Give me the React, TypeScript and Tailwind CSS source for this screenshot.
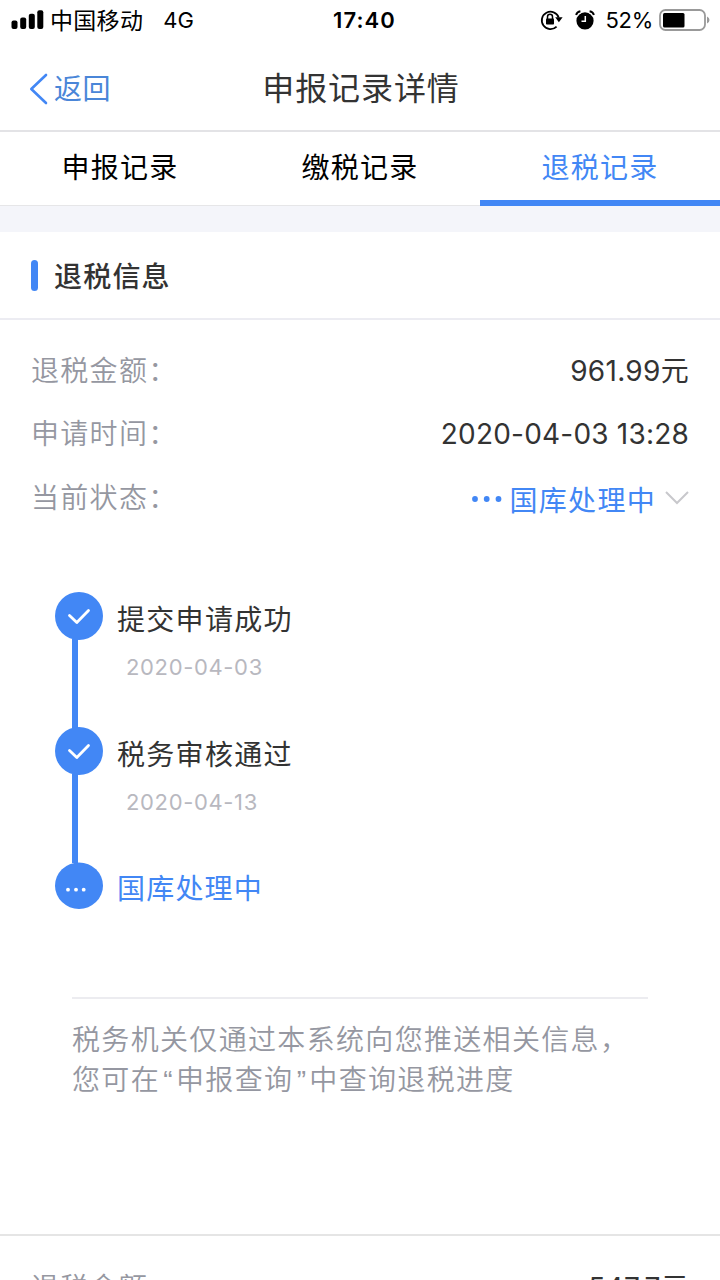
import React from 'react';

const tabs = [
  { id: 'declare', label: '申报记录' },
  { id: 'pay', label: '缴税记录' },
  { id: 'refund', label: '退税记录' },
];

const steps = [
  { title: '提交申请成功', date: '2020-04-03', done: true },
  { title: '税务审核通过', date: '2020-04-13', done: true },
  { title: '国库处理中', date: '', done: false },
];

const StatusBar = () => (
  <div className="flex h-10 shrink-0 items-center text-black">
    <div className="flex flex-1 items-center pl-[11px]">
      <svg width="34" height="20" viewBox="0 0 34 20">
        <rect x="0.5" y="10.5" width="6" height="8.5" rx="2" />
        <rect x="9.2" y="7.5" width="6" height="11.5" rx="2" />
        <rect x="17.8" y="3.8" width="6" height="15.2" rx="2" />
        <rect x="26.3" y="0.3" width="6" height="18.7" rx="2" />
      </svg>
      <span className="ml-[5px] pt-0.5 text-[23px] leading-10 tracking-[0.3px]">中国移动</span>
      <span className="ml-5 text-[22px] leading-10">4G</span>
    </div>
    <span className="w-[74px] pl-2 text-center text-[22px] leading-10 font-semibold tracking-[1.1px]">17:40</span>
    <div className="flex flex-1 items-center justify-end pr-[10px]">
      <svg width="23" height="22" viewBox="0 0 23 22" fill="none">
        <path d="M16.6 17.6A8.7 8.7 0 1 1 18.7 8.5" stroke="#000" strokeWidth="1.8" />
        <path d="M15.2 8.2h7.4l-3.7 5z" fill="#000" />
        <rect x="6" y="9.5" width="8" height="6" rx="0.8" fill="#000" />
        <path d="M7.5 10V7.8a2.5 2.5 0 0 1 5 0V10" stroke="#000" strokeWidth="1.5" />
      </svg>
      <svg className="ml-3" width="20" height="20" viewBox="0 0 20 20" fill="none">
        <circle cx="10" cy="10.8" r="8.6" fill="#000" />
        <path d="M10.3 6v5.2H6.5" stroke="#fff" strokeWidth="1.5" />
        <path d="M1 5.3Q1.8 1.8 5.4 1.2M19 5.3Q18.2 1.8 14.6 1.2" stroke="#fff" strokeWidth="4.5" />
        <path d="M1.1 5Q1.9 1.8 5.4 1.2M18.9 5Q18.1 1.8 14.6 1.2" stroke="#000" strokeWidth="1.9" />
      </svg>
      <span className="ml-[11px] text-[22px] leading-10 tracking-[-0.3px]">52%</span>
      <svg className="ml-1.5" width="51" height="22" viewBox="0 0 51 22" fill="none">
        <rect x="1" y="1" width="45" height="20" rx="5.5" stroke="#999" strokeWidth="1.8" />
        <rect x="4" y="4" width="21.5" height="14.5" rx="1.5" fill="#000" />
        <path d="M48 7.5q2.5 1 2.5 3.5t-2.5 3.5z" fill="#999" />
      </svg>
    </div>
  </div>
);

const Header = () => (
  <header className="grid h-[92px] shrink-0 grid-cols-3 items-center border-b-2 border-[#e3e3e6] pt-2">
    <button className="flex items-center pl-[29px] text-[#4287f5]">
      <svg className="-mt-px" width="19" height="32" viewBox="0 0 19 32" fill="none" stroke="currentColor" strokeWidth="2.6" strokeLinecap="round" strokeLinejoin="round">
        <path d="M17 2 2.3 16 17 30" />
      </svg>
      <span className="ml-[6px] text-[28px] leading-10 tracking-[0.6px] text-[#4a86d8]">返回</span>
    </button>
    <h1 className="pl-0.5 text-center text-[32px] leading-10 tracking-[0.9px] whitespace-nowrap text-[#333]">申报记录详情</h1>
  </header>
);

const Tabs = () => (
  <nav className="grid h-[74px] shrink-0 grid-cols-3 shadow-[inset_0_-1px_0_#e6e6e8]">
    {tabs.map((tab) => (
      <button
        key={tab.id}
        className={
          tab.id === 'refund'
            ? 'border-b-6 border-[#4287f5] pt-1 text-[28px] leading-10 tracking-[1.3px] text-[#4287f5]'
            : 'pt-1 pb-1.5 text-[28px] leading-10 tracking-[1.3px] text-black'
        }
      >
        {tab.label}
      </button>
    ))}
  </nav>
);

const InfoRow = ({ label, children }: { label: string; children: React.ReactNode }) => (
  <div className="flex h-[63.5px] shrink-0 items-center justify-between text-[28px] leading-10">
    <span className="font-[350] tracking-[1.3px] text-[#9597a1]">{label}：</span>
    {children}
  </div>
);

const StepIcon = ({ done }: { done: boolean }) => (
  <svg className="block" width="48" height="48" viewBox="0 0 48 48" fill="none">
    {done ? (
      <>
        <circle cx="24" cy="24" r="24" fill="#4287f5" />
        <path d="m14.5 23.5 7.3 7L33.5 18.5" stroke="#fff" strokeWidth="2.8" strokeLinecap="round" strokeLinejoin="round" />
      </>
    ) : (
      <>
        <ellipse cx="24" cy="24.7" rx="24" ry="23.2" fill="#4287f5" />
        <g fill="#fff">
          <circle cx="13" cy="28.7" r="1.9" />
          <circle cx="21" cy="28.7" r="1.9" />
          <circle cx="28.7" cy="28.7" r="1.9" />
        </g>
      </>
    )}
  </svg>
);

const Timeline = () => (
  <ol className="pl-[55px]">
    {steps.map((step, i) => (
      <li key={step.title} className="flex h-[134.5px]">
        <div className="flex w-12 shrink-0 flex-col">
          <StepIcon done={step.done} />
          {i < steps.length - 1 && <div className="-mt-px -mb-0.5 ml-[17px] w-1.5 flex-1 bg-[#4287f5]" />}
        </div>
        <div className="ml-[14px] pt-2">
          <p className={step.done ? 'text-[28px] leading-10 tracking-[1.3px] text-[#333]' : 'text-[28px] leading-10 tracking-[1.2px] text-[#4287f5]'}>
            {step.title}
          </p>
          {step.date && <p className="mt-[7px] ml-[9px] text-[22px] leading-10 tracking-[0.65px] text-[#b8b8bf]">{step.date}</p>}
        </div>
      </li>
    ))}
  </ol>
);

const Quote = ({ children }: { children: React.ReactNode }) => (
  <span className="inline-block w-4 text-center font-['Liberation_Sans',sans-serif] leading-none tracking-normal">{children}</span>
);

const App = () => {
  return (
    <div className="flex h-[1280px] w-[720px] flex-col overflow-hidden bg-white font-['Inter','Noto_Sans_CJK_SC',sans-serif]">
      <StatusBar />
      <Header />
      <Tabs />
      <div className="h-[26px] shrink-0 bg-[#f4f5fa]" />

      <div className="flex h-[88px] shrink-0 items-center border-b-2 border-[#ececf2] pt-px pl-[31px]">
        <span className="h-[31px] w-[7px] rounded-full bg-[#4287f5]" />
        <h2 className="ml-4 pt-[3px] text-[28px] leading-10 font-medium tracking-[1.2px] text-[#333]">退税信息</h2>
      </div>

      <section className="h-[272px] shrink-0 px-[31px] pt-[19px]">
        <InfoRow label="退税金额">
          <span className="tracking-[0.3px] text-[#333]">961.99元</span>
        </InfoRow>
        <InfoRow label="申请时间">
          <span className="tracking-[0.2px] text-[#333]">2020-04-03 13:28</span>
        </InfoRow>
        <InfoRow label="当前状态">
          <span className="flex items-center pt-1.5 tracking-[1.3px] text-[#4287f5]">
            <svg className="mr-[6px] -mt-1" width="32" height="8" viewBox="0 0 32 8" fill="currentColor">
              <circle cx="4" cy="4" r="2.9" />
              <circle cx="15.7" cy="4" r="2.9" />
              <circle cx="27.5" cy="4" r="2.9" />
            </svg>
            国库处理中
            <svg className="ml-[9px] -mt-1.5" width="24" height="14" viewBox="0 0 24 14" fill="none" stroke="#c8c8cc" strokeWidth="2">
              <path d="m1 1 11 11L23 1" />
            </svg>
          </span>
        </InfoRow>
      </section>

      <section className="h-[644px] shrink-0 border-b-2 border-[#e5e5e5]">
        <div className="h-[405px]">
          <Timeline />
        </div>
        <div className="mx-[72px] border-t-2 border-[#ececf0] pt-[21px] text-[28px] leading-10 font-[350] tracking-[1.33px] whitespace-nowrap text-[#9597a1]">
          <p>税务机关仅通过本系统向您推送相关信息，</p>
          <p>
            您可在<Quote>“</Quote>申报查询<Quote>”</Quote>中查询退税进度
          </p>
        </div>
      </section>

      <section className="shrink-0 px-[31px] pt-[20px]">
        <InfoRow label="退税金额">
          <span className="tracking-[0.3px] text-[#333]">547.7元</span>
        </InfoRow>
      </section>
    </div>
  );
};

export default App;
